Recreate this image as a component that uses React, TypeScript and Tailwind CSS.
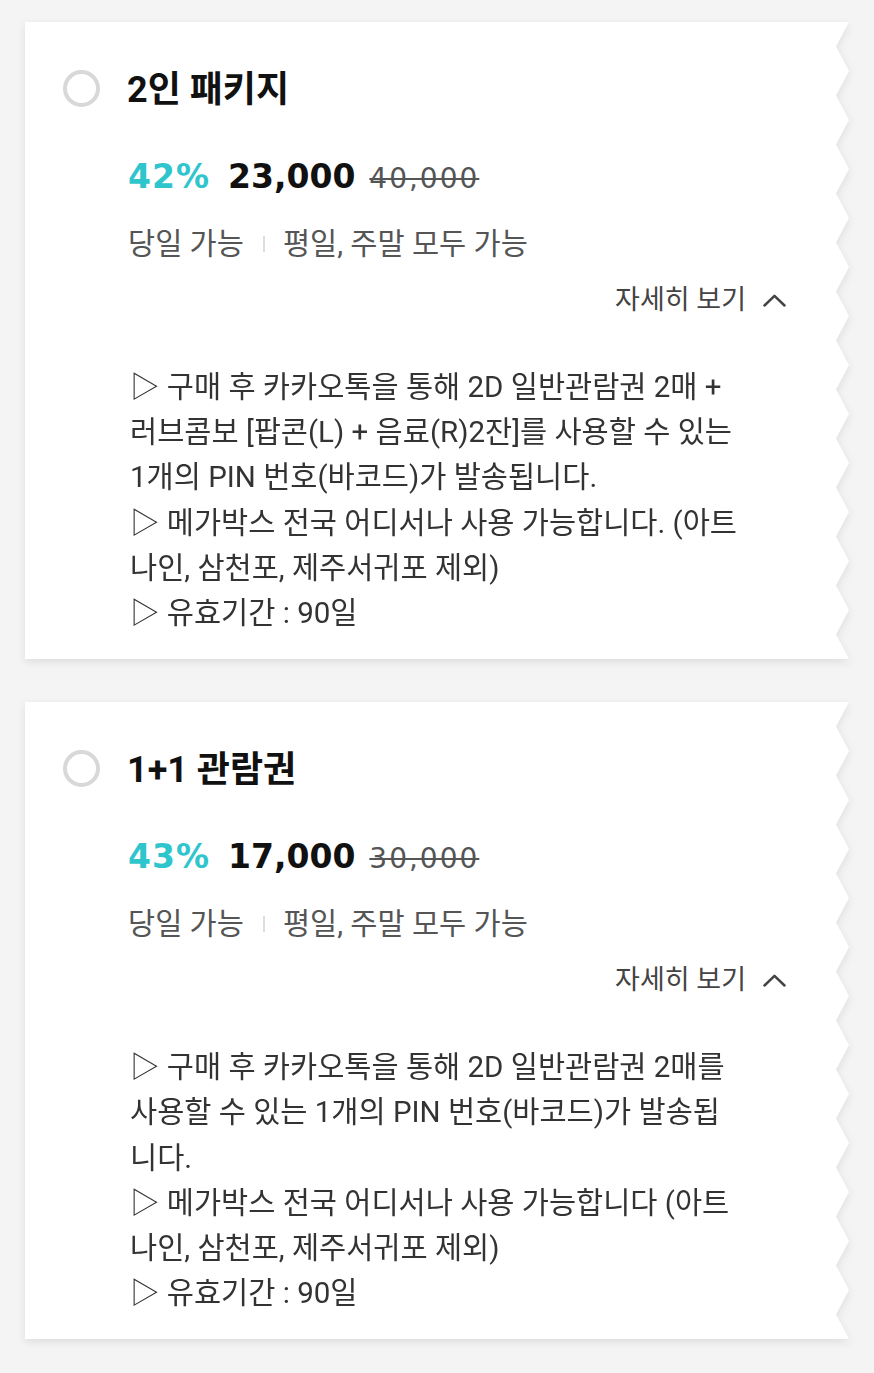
import React from "react";

type CardProps = {
  id: string;
  title: string;
  pct: string;
  price: string;
  orig: string;
  lines: string[];
};

const KR = "font-['Roboto','Noto_Sans_CJK_KR',sans-serif]";

function Card({ id, title, pct, price, orig, lines }: CardProps) {
  return (
    <div className="flex drop-shadow-[0_3px_4px_rgba(0,0,0,0.09)]">
      <div className={`flex-1 bg-white pl-[38px] pt-[46px] pb-[23px] ${KR}`}>
        <div className="flex h-[44px] items-center gap-[27px]">
          <div className="mb-[4px] h-[37px] w-[37px] shrink-0 rounded-full border-[4px] border-[#d8d8d8]" />
          <div className="text-[36px] font-bold leading-[44px] text-[#111]">{title}</div>
        </div>
        <div className="pl-[65px]">
          <div className="mt-[40px] flex h-[48px] items-baseline font-['DejaVu_Sans',sans-serif]">
            <span className="text-[33px] font-bold tracking-[1px] text-[#2ec5cd]">{pct}</span>
            <span className="ml-[18px] text-[33px] font-bold text-[#111]">{price}</span>
            <span className="ml-[14px] text-[28px] tracking-[2px] text-[#555] line-through decoration-[#555] decoration-[1.5px]">
              {orig}
            </span>
          </div>
          <div className="mt-[26px] flex h-[36px] items-center text-[29.5px] text-[#555]">
            <span>당일 가능</span>
            <span className="ml-[19px] mr-[18px] h-[16px] w-[2px] bg-[#dddddd]" />
            <span>평일, 주말 모두 가능</span>
          </div>
          <div className="mt-[22px] flex h-[32px] items-center justify-end pr-[50px] text-[27px] text-[#444]">
            <span>자세히 보기</span>
            <svg className="ml-[17px]" width="23" height="13" viewBox="0 0 23 13" fill="none">
              <path d="M1.5 11.5 L11.5 1.8 L21.5 11.5" stroke="#444" strokeWidth="2.5" strokeLinecap="round" strokeLinejoin="round" />
            </svg>
          </div>
          <div className="mt-[49px] pl-[2px] text-[29.5px] leading-[45.2px] text-[#333]">
            {lines.map((l, i) => (
              <div key={i} className="whitespace-nowrap">
                {l}
              </div>
            ))}
          </div>
        </div>
      </div>
      <div className="flex w-[13px] shrink-0 flex-col">
        <svg className="min-h-0 w-[13px] flex-1" width="13">
          <defs>
            <pattern id={id} width="13" height="49" patternUnits="userSpaceOnUse">
              <polygon points="0,0 13,0 0,24.5 13,49 0,49" fill="white" />
            </pattern>
          </defs>
          <rect x="0" y="0" width="13" height="100%" fill={`url(#${id})`} />
        </svg>
      </div>
    </div>
  );
}

export default function App() {
  return (
    <div className="flex min-h-screen flex-col gap-[43px] bg-[#f4f4f4] px-[25px] pb-[32px] pt-[22px]">
      <Card
        id="zz1"
        title="2인 패키지"
        pct="42%"
        price="23,000"
        orig="40,000"
        lines={[
          "▷ 구매 후 카카오톡을 통해 2D 일반관람권 2매 +",
          "러브콤보 [팝콘(L) + 음료(R)2잔]를 사용할 수 있는",
          "1개의 PIN 번호(바코드)가 발송됩니다.",
          "▷ 메가박스 전국 어디서나 사용 가능합니다. (아트",
          "나인, 삼천포, 제주서귀포 제외)",
          "▷ 유효기간 : 90일",
        ]}
      />
      <Card
        id="zz2"
        title="1+1 관람권"
        pct="43%"
        price="17,000"
        orig="30,000"
        lines={[
          "▷ 구매 후 카카오톡을 통해 2D 일반관람권 2매를",
          "사용할 수 있는 1개의 PIN 번호(바코드)가 발송됩",
          "니다.",
          "▷ 메가박스 전국 어디서나 사용 가능합니다 (아트",
          "나인, 삼천포, 제주서귀포 제외)",
          "▷ 유효기간 : 90일",
        ]}
      />
    </div>
  );
}
